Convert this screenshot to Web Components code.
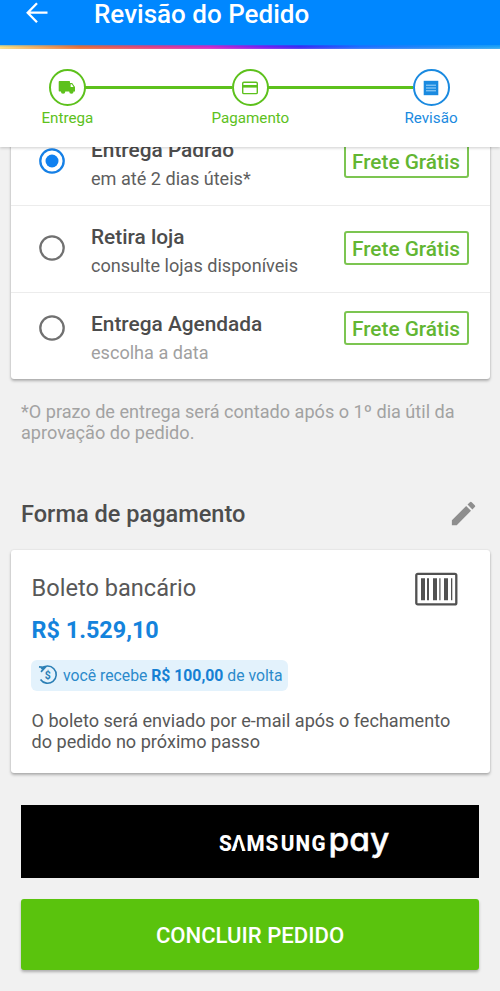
<!DOCTYPE html>
<html lang="pt-BR">
<head>
<meta charset="utf-8">
<title>Revisão do Pedido</title>
<style>
html,body{margin:0;height:100%;overflow:hidden}
body{font-family:Roboto,"Liberation Sans",sans-serif;background:#f1f1f1;color:#505050}
</style>
</head>
<body>
<order-review></order-review>
<script>
const define = (name, html) => {
  const tpl = document.createElement('template');
  customElements.define(name, class extends HTMLElement {
    constructor() {
      super();
      tpl.innerHTML = html;
      this.attachShadow({mode: 'open'}).append(tpl.content.cloneNode(true));
    }
  });
};

define('app-header', `
<style>
:host{display:block;background:#0087ff;color:#fff;flex:none}
.bar{height:45px;display:flex;align-items:flex-start;padding-left:26px}
svg{width:22px;height:22px;margin-top:2px}
h1{margin:0 0 0 46px;font-size:26px;font-weight:500;line-height:28px;white-space:nowrap}
.rainbow{height:4px;background:linear-gradient(rgba(0,135,255,.45),rgba(0,135,255,0) 50%,rgba(255,255,255,.25)),linear-gradient(90deg,#ffe27a 0,#ee6a2c 16%,#ea3a78 30%,#d81fc4 42%,#7a14f0 53%,#3a22f4 60%,#1d6bff 72%,#1fa5f5 100%)}
</style>
<div class="bar">
<svg viewBox="0 0 22 22" fill="none" stroke="#fff" stroke-width="2.3"><path d="M21.5 10.7H2M11 1.2 1.7 10.7 11 20.2"/></svg>
<h1><slot></slot></h1></div>
<div class="rainbow"></div>`);

define('step-item', `
<style>
:host{display:flex;flex-direction:column;align-items:center;width:90px;color:#5dc11c}
:host([current]){color:#1a8ae0}
.c{box-sizing:border-box;width:37px;height:37px;border:2px solid currentColor;border-radius:50%;background:#fff;display:flex;align-items:center;justify-content:center}
.t{font-size:15.2px;line-height:18px;margin-top:3px;white-space:nowrap}
</style>
<div class="c"><slot name="icon"></slot></div><div class="t"><slot></slot></div>`);

define('order-steps', `
<style>
:host{display:block;flex:none;height:98px;box-sizing:border-box;padding:20px 24px 0 22.4px;background:#fff;box-shadow:0 1px 3px rgba(0,0,0,.2);position:relative;z-index:1}
.row{display:grid;grid-template-columns:90px 93px 90px 1fr 90px;align-items:start}
i{height:3px;background:#5dc11c;margin:17px -27px 0}
svg{display:block}
</style>
<div class="row">
<step-item><svg slot="icon" width="18" height="16" viewBox="0 0 18 16"><path fill="currentColor" d="M1.5 1h9.7q.8 0 .8.8V3h2.2l2.8 4v4.6h-1.4a2.2 2.2 0 0 1-4.4 0H7.3a2.2 2.2 0 0 1-4.4 0H1.5q-.8 0-.8-.8v-9q0-.8.8-.8z"/><path fill="#fff" d="M12.6 4.2h1.2l1.8 2.7h-3z"/></svg>Entrega</step-item>
<i></i>
<step-item><svg slot="icon" width="18" height="16" viewBox="0 0 18 16"><rect x="1.7" y="2.2" width="14.6" height="11.4" rx="1.2" fill="none" stroke="currentColor" stroke-width="1.4"/><path fill="currentColor" d="M1.5 5h15v2.6h-15z"/></svg>Pagamento</step-item>
<i></i>
<step-item current><svg slot="icon" width="16" height="16" viewBox="0 0 16 16"><path fill="currentColor" d="M.7.8h14.6v14.4H.7z"/><path stroke="#a5d7fa" stroke-width="1" d="M3 5.2h10M3 8h10M3 10.8h10"/></svg>Revisão</step-item>
</div>`);

define('free-badge', `
<style>
:host{box-sizing:border-box;display:flex;align-items:center;justify-content:center;width:125px;height:34px;border:2px solid #7cc551;border-radius:3px;color:#62b632;font-size:20.8px;font-weight:500;white-space:nowrap;padding-top:1px}
</style><slot></slot>`);

define('shipping-option', `
<style>
:host{box-sizing:border-box;height:87px;display:grid;grid-template-columns:80px 1fr 125px;padding-right:21px;border-bottom:1px solid #ececec}
:host([last]){border:0;height:86px}
svg{width:28px;height:28px;margin:28px 0 0 27px}
:host([last]) svg{margin-top:21px}
.txt{padding-top:17px;white-space:nowrap}
.t{font-size:20.85px;line-height:28px;font-weight:500;color:#4c4c4c}
.s{font-size:18.1px;line-height:29px;color:#5e5e5e}
:host([last]) .s{color:#a0a0a0}
.dot{display:none}
:host([checked]) .dot{display:block}
.ring{stroke:#717171}
:host([checked]) .ring{stroke:#1680e6}
free-badge{margin-top:25px}
:host([last]) free-badge{margin-top:18px}
</style>
<svg viewBox="0 0 28 28"><circle class="ring" cx="14" cy="14" r="11.7" fill="none" stroke-width="2.3"/><circle class="dot" cx="14" cy="14" r="6.5" fill="#0f80f0"/></svg>
<div class="txt"><div class="t"><slot></slot></div><div class="s"><slot name="sub"></slot></div></div>
<free-badge>Frete Grátis</free-badge>`);

define('surface-card', `
<style>
:host{display:block;background:#fff;border-radius:3px;box-shadow:0 2px 3px rgba(0,0,0,.27),0 0 2px rgba(0,0,0,.12);margin:0 10.5px 0 11px}
</style><slot></slot>`);

define('cashback-chip', `
<style>
:host{box-sizing:border-box;display:flex;align-items:center;width:257px;height:31px;border-radius:6px;background:#e3f2fc;color:#2b8acb;font-size:15.75px;padding-left:6px;white-space:nowrap}
svg{width:22px;height:22px;margin-right:4px;flex:none}
span{padding-top:1px}
::slotted(b){color:#1580d3}
text{font:700 10.5px Roboto,sans-serif;fill:#2b7fb5}
</style>
<svg viewBox="0 0 22 22" fill="none" stroke="#2b7fb5" stroke-width="1.6"><path d="M4.2 4.9A8.6 8.6 0 1 1 3.5 15.5M2 2.9 8.2 3.4 4 7.9"/><text x="10.8" y="14.7" text-anchor="middle" stroke="none">$</text></svg><span><slot></slot></span>`);

define('payment-summary', `
<style>
:host{display:block;box-sizing:border-box;height:223.5px;padding:23.7px 32px 0 20.5px}
.top{display:flex;justify-content:space-between;height:28px}
.n{font-size:23.6px;line-height:28px;color:#585858}
.bar{width:43px;height:34px;margin-top:-2px}
.p{font-size:23.4px;font-weight:700;line-height:28px;color:#1483dc;margin-top:14px}
cashback-chip{margin:16px 0 0 -.5px}
.d{font-size:18.1px;line-height:21.5px;margin:19px -20px 0 0;color:#585858}
</style>
<div class="top"><div class="n">Boleto bancário</div>
<svg class="bar" viewBox="0 0 43 34"><rect x="1.3" y="1.8" width="40" height="30.6" rx="1.5" fill="none" stroke="#515151" stroke-width="2.3"/><path fill="#515151" d="M6 6.2h4v22H6zM12 6.2h2v22h-2zM18 6.2h4v22h-4zM24.3 6.2h1.2v22h-1.2zM29 6.2h4v22h-4zM36 6.2h1.3v22H36z"/></svg></div>
<div class="p">R$ 1.529,10</div>
<cashback-chip>você recebe <b>R$ 100,00</b> de volta</cashback-chip>
<div class="d">O boleto será enviado por e-mail após o fechamento<br>do pedido no próximo passo</div>`);

define('samsung-pay-button', `
<style>
:host{display:block;height:72.5px;background:#000;margin:0 21px}
svg{display:block;width:458px;height:72px}
.s{font:800 22px Roboto,sans-serif}
.p{font:500 32.5px Inter,sans-serif;font-feature-settings:"cv11";stroke:#fff;stroke-width:.4}
</style>
<svg viewBox="21 805 458 72" fill="#fff">
<text class="s" transform="translate(219 850.6) scale(.94 1)" x="0 13.4 29.2 49.6 65.8 81.4 98.3">SAMSUNG</text>
<path fill="#000" d="M238.8 839 235.4 851.2H242.2z"/>
<text class="p" x="328.4" y="851.4" textLength="61" lengthAdjust="spacingAndGlyphs">pay</text>
</svg>`);

define('confirm-button', `
<style>
:host{display:flex;align-items:center;justify-content:center;height:71.5px;margin:21px 21px 0;background:#5ac30d;border-radius:3px;box-shadow:0 2px 3px rgba(0,0,0,.28);color:#fff;font-size:22.1px;font-weight:500;padding-top:1px;box-sizing:border-box}
</style><slot></slot>`);

define('order-review', `
<style>
:host{display:flex;flex-direction:column;height:991px;width:500px;overflow:hidden;background:#f1f1f1}
main{flex:1;min-height:0;overflow:hidden}
.first{margin-top:-28px}
.note{margin:22.3px 21px 0;font-size:18.1px;line-height:21px;color:#a2a2a2;white-space:nowrap}
.head{display:flex;justify-content:space-between;align-items:center;height:30px;margin:55.5px 21px 0}
h2{margin:0;font-size:23.55px;font-weight:500;color:#4d4d4d}
.head svg{width:31px;height:31px}
.pay{margin-top:21.2px;margin-bottom:32px}
</style>
<app-header>Revisão do Pedido</app-header>
<order-steps></order-steps>
<main>
<surface-card class="first">
<shipping-option checked>Entrega Padrão<span slot="sub">em até 2 dias úteis*</span></shipping-option>
<shipping-option>Retira loja<span slot="sub">consulte lojas disponíveis</span></shipping-option>
<shipping-option last>Entrega Agendada<span slot="sub">escolha a data</span></shipping-option>
</surface-card>
<div class="note">*O prazo de entrega será contado após o 1º dia útil da<br>aprovação do pedido.</div>
<div class="head"><h2>Forma de pagamento</h2>
<svg viewBox="0 0 24 24" fill="#8e8e8e"><path d="M3 17.25V21h3.75L17.81 9.94l-3.75-3.75L3 17.25zM20.71 7.04a.996.996 0 0 0 0-1.41l-2.34-2.34a.996.996 0 0 0-1.41 0l-1.83 1.83 3.75 3.75 1.83-1.83z"/></svg></div>
<surface-card class="pay"><payment-summary></payment-summary></surface-card>
<samsung-pay-button></samsung-pay-button>
<confirm-button>CONCLUIR PEDIDO</confirm-button>
</main>`);
</script>
</body>
</html>
